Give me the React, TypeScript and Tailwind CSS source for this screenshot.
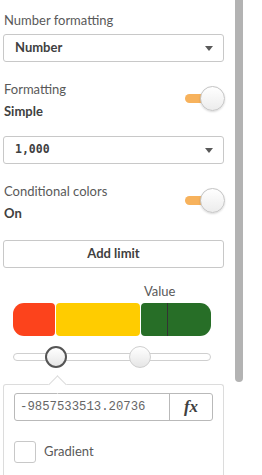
import type { ReactNode } from "react"

const font = { fontFamily: 'Lato, "Open Sans", "Liberation Sans", sans-serif' }
const mono = { fontFamily: '"Liberation Mono", "DejaVu Sans Mono", monospace' }
const dejavu = { fontFamily: '"DejaVu Sans Mono", "Liberation Mono", monospace' }

function Caret() {
  return (
    <svg width="8" height="5" viewBox="0 0 8 5" className="shrink-0">
      <path d="M0 0 H8 L4 5 Z" fill="#595959" />
    </svg>
  )
}

function Dropdown({ children, className = "" }: { children: ReactNode; className?: string }) {
  return (
    <div className={`flex h-[28px] items-center justify-between rounded-[3px] border border-[#c8c8c8] bg-white pl-[11px] pr-[10px] ${className}`}>
      {children}
      <Caret />
    </div>
  )
}

function Toggle() {
  return (
    <div className="relative h-[25px] w-[40px] shrink-0">
      <span className="absolute left-0 top-[8px] h-[9px] w-[22px] rounded-full bg-[#f7b25c]" />
      <span className="absolute right-0 top-0 size-[25px] rounded-full border border-[#c4c4c4] bg-gradient-to-b from-white to-[#ececec] shadow-[0_1px_2px_rgba(0,0,0,0.15)]" />
    </div>
  )
}

function ToggleRow({ label, value, className = "" }: { label: string; value: string; className?: string }) {
  return (
    <div className={`flex items-center justify-between ${className}`}>
      <div className="pl-[1px]">
        <div className="text-[13px] leading-[16px] text-[#595959]">{label}</div>
        <div className="mt-[6px] text-[13px] font-bold leading-[16px] text-[#404040]">{value}</div>
      </div>
      <div className="mr-[-1px] mt-[-3px]">
        <Toggle />
      </div>
    </div>
  )
}

export default function App() {
  return (
    <div className="flex h-[475px] w-[262px] overflow-hidden bg-white" style={font}>
      <div className="ml-[3px] flex w-[221px] flex-col">
        <div className="mt-[12px] pl-[1px] text-[13px] leading-[16px] text-[#595959]">Number formatting</div>
        <Dropdown className="mt-[6px]">
          <span className="text-[13px] font-bold text-[#404040]">Number</span>
        </Dropdown>

        <ToggleRow label="Formatting" value="Simple" className="mt-[19px]" />

        <Dropdown className="mt-[17px]">
          <span className="text-[11.5px] font-bold text-[#404040]" style={dejavu}>1,000</span>
        </Dropdown>

        <ToggleRow label="Conditional colors" value="On" className="mt-[19px]" />

        <button className="mt-[19px] h-[28px] rounded-[3px] border border-[#c8c8c8] bg-white text-[13px] font-bold text-[#404040]">
          Add limit
        </button>

        <div className="mt-[15px] pl-[141px] text-[13px] leading-[16px] text-[#595959]">Value</div>

        <div className="ml-[10px] mt-[4px] flex h-[33px] w-[198px] gap-[1px]">
          <div className="w-[42px] rounded-l-[11px] rounded-r-[4px] bg-[#fc431c]" />
          <div className="w-[84px] rounded-[4px] bg-[#ffcc00]" />
          <div className="relative flex-1 rounded-l-[4px] rounded-r-[11px] bg-[#276e27]">
            <span className="absolute bottom-0 left-[26px] top-0 w-[1px] bg-[#333]" />
          </div>
        </div>

        <div className="relative ml-[10px] mt-[10px] h-[22px] w-[198px]">
          <span className="absolute left-0 right-0 top-[7px] h-[8px] rounded-full border border-[#cfcfcf] bg-white" />
          <span className="absolute left-[32px] top-0 size-[22px] rounded-full border-2 border-[#555] bg-gradient-to-b from-white to-[#e6e6e6]" />
          <span className="absolute left-[116px] top-0 size-[22px] rounded-full border border-[#cfcfcf] bg-gradient-to-b from-white to-[#e6e6e6]" />
        </div>

        <div className="relative mt-[16px] flex-1 rounded-t-[3px] border border-b-0 border-[#dcdcdc] px-[10px] pt-[8px]">
          <span className="absolute left-[47px] top-[-7px] size-[13px] rotate-45 border-l border-t border-[#dcdcdc] bg-white" />
          <div className="flex h-[28px] rounded-[3px] border border-[#b9b9b9]">
            <div className="flex flex-1 items-center pl-[5px] text-[12.3px] text-[#666]" style={mono}>
              -9857533513.20736
            </div>
            <div
              className="flex w-[43px] items-center justify-center border-l border-[#b9b9b9] text-[17px] font-bold italic text-[#404040]"
              style={{ fontFamily: '"Liberation Serif", "DejaVu Serif", serif' }}
            >
              fx
            </div>
          </div>
          <div className="mt-[20px] flex items-center gap-[8px]">
            <span className="size-[22px] rounded-[3px] border border-[#c8c8c8] bg-white" />
            <span className="text-[13px] text-[#595959]">Gradient</span>
          </div>
        </div>
      </div>
      <div className="ml-[11px] h-[382px] w-[8px] rounded-b-full bg-[#b3b3b3]" />
    </div>
  )
}
